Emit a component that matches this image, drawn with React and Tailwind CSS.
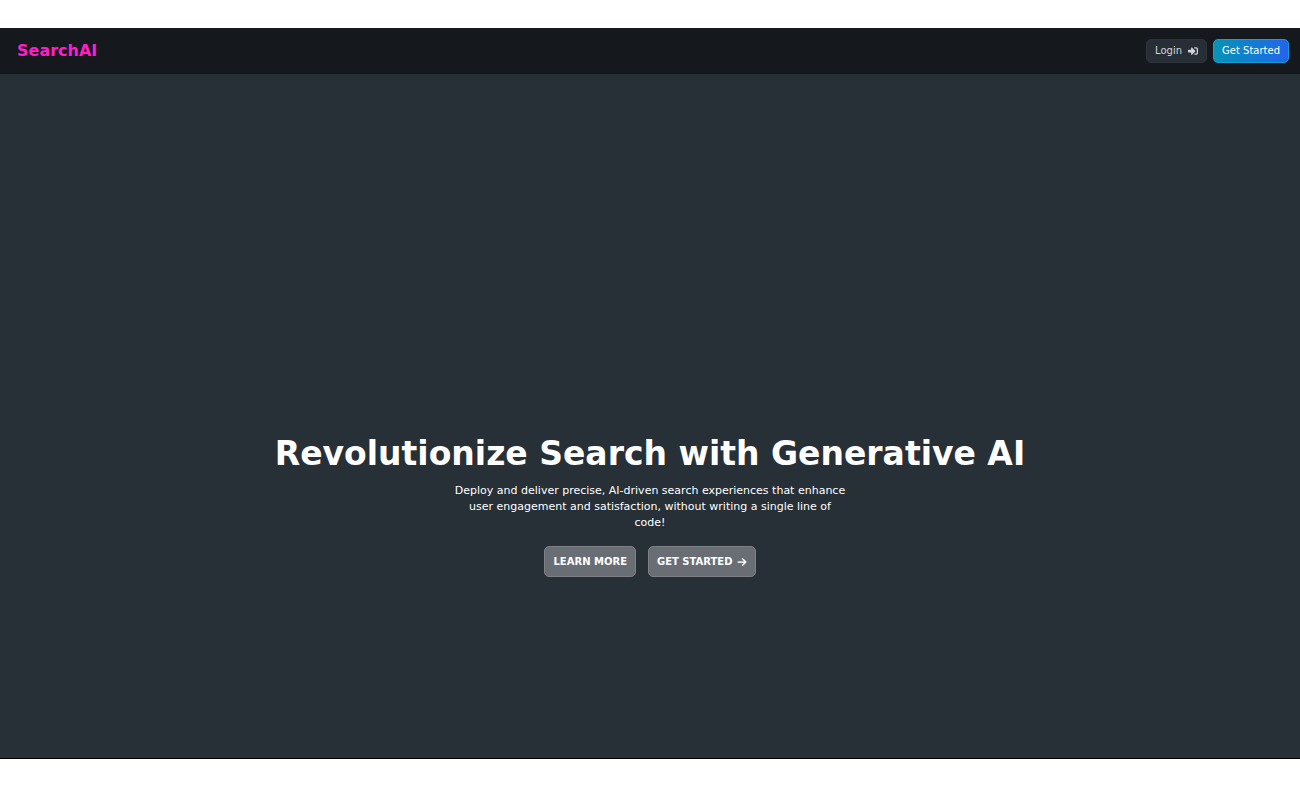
import { FaArrowRight } from "react-icons/fa6";
import { FaSignInAlt } from "react-icons/fa";

function Header() {
  return (
    <header className="flex h-[46px] items-center justify-between border-b border-[#111418] bg-[#15181c] pl-[17px] pr-[11px]">
      <a href="#" className="text-[16px] leading-6 font-bold text-[#ff1fc7]">SearchAI</a>
      <nav className="flex items-center gap-1.5">
        <a href="#login" className="flex h-6 items-center gap-1.5 rounded-[5px] border border-[#2c333b] bg-[#272e36] px-2 text-[10px] text-[#d1d5db]">
          Login
          <FaSignInAlt size={10} />
        </a>
        <a href="#start" className="flex h-6 items-center rounded-[5px] border border-[#139fd6] bg-linear-to-r from-[#0a92b5] to-[#2463eb] px-2 text-[10px] text-white">
          Get Started
        </a>
      </nav>
    </header>
  );
}

function Hero() {
  return (
    <main className="flex flex-1 flex-col items-center border-b border-black bg-[#272f37] pt-[360px] pb-[181px] text-center text-white">
      <h1 className="text-[33px] leading-10 font-bold">Revolutionize Search with Generative AI</h1>
      <p className="mt-[9px] max-w-[392px] text-[11px] leading-4">
        Deploy and deliver precise, AI-driven search experiences that enhance user engagement and satisfaction, without writing a single line of code!
      </p>
      <div className="mt-[15px] flex gap-3">
        <button type="button" className="h-[31px] rounded-[5px] border border-[#7d8186] bg-[#696e74] px-2 text-[10px] font-bold">
          LEARN MORE
        </button>
        <button type="button" className="flex h-[31px] items-center gap-1 rounded-[5px] border border-[#7d8186] bg-[#696e74] px-2 text-[10px] font-bold">
          GET STARTED
          <FaArrowRight size={10} stroke="currentColor" strokeWidth={16} />
        </button>
      </div>
    </main>
  );
}

export default function App() {
  return (
    <div className="flex min-h-screen flex-col bg-white pt-7 pb-[29px] font-['DejaVu_Sans',sans-serif]">
      <Header />
      <Hero />
    </div>
  );
}
